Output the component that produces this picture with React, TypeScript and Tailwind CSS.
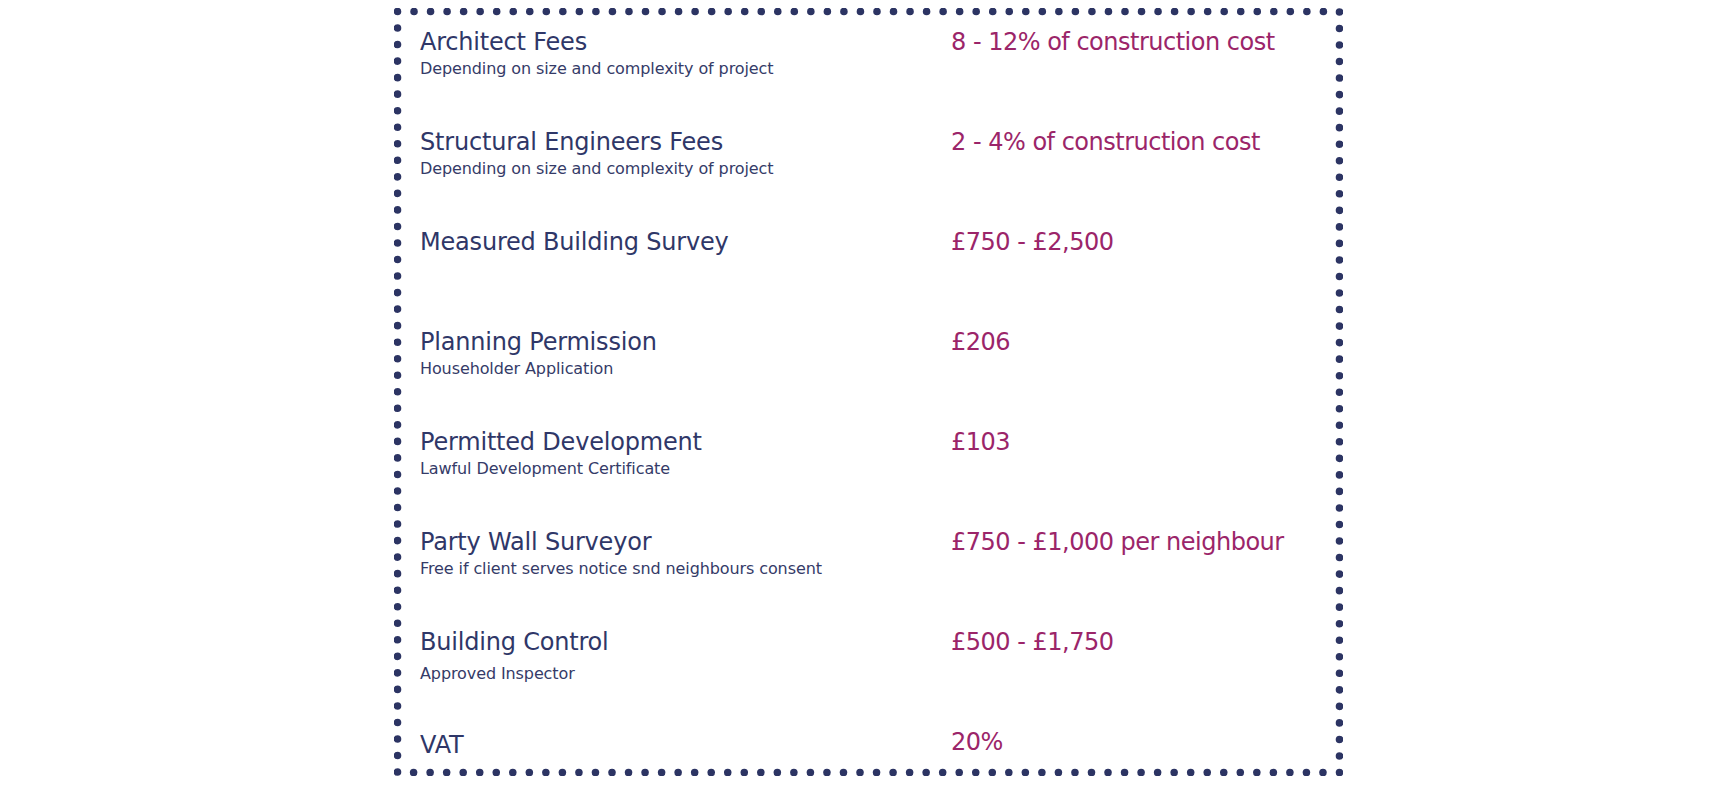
type Fee = {
  title: string;
  note?: string;
  price: string;
  noteClass?: string;
  titleClass?: string;
};

const fees: Fee[] = [
  {
    title: "Architect Fees",
    note: "Depending on size and complexity of project",
    price: "8 - 12% of construction cost",
  },
  {
    title: "Structural Engineers Fees",
    note: "Depending on size and complexity of project",
    price: "2 - 4% of construction cost",
  },
  { title: "Measured Building Survey", price: "£750 - £2,500" },
  {
    title: "Planning Permission",
    note: "Householder Application",
    price: "£206",
  },
  {
    title: "Permitted Development",
    note: "Lawful Development Certificate",
    price: "£103",
  },
  {
    title: "Party Wall Surveyor",
    note: "Free if client serves notice snd neighbours consent",
    price: "£750 - £1,000 per neighbour",
  },
  {
    title: "Building Control",
    note: "Approved Inspector",
    price: "£500 - £1,750",
    noteClass: "mt-[8px]",
  },
  { title: "VAT", price: "20%", titleClass: "mt-[3px]" },
];

// dotted frame drawn as round dots along the rect
function DottedFrame() {
  return (
    <svg
      className="pointer-events-none absolute inset-0"
      width="949"
      height="768"
      viewBox="0 0 949 768"
    >
      <rect
        x="3.5"
        y="3.5"
        width="942"
        height="761"
        fill="none"
        stroke="#2c3463"
        strokeWidth="7.6"
        strokeLinecap="round"
        pathLength={206}
        strokeDasharray="0 1"
      />
    </svg>
  );
}

function FeeRow({ fee, last }: { fee: Fee; last: boolean }) {
  return (
    <div className={`grid grid-cols-[531px_1fr] ${last ? "" : "h-[100px]"}`}>
      <div>
        <p
          className={`text-[24px] leading-[28px] tracking-[-0.2px] text-[#2f3768] ${fee.titleClass ?? ""}`}
        >
          {fee.title}
        </p>
        {fee.note && (
          <p
            className={`text-[16px] leading-[20px] tracking-[-0.1px] text-[#353b68] ${fee.noteClass ?? "mt-[3px]"}`}
          >
            {fee.note}
          </p>
        )}
      </div>
      <p className="text-[24px] leading-[28px] tracking-[-0.5px] text-[#9b2569]">
        {fee.price}
      </p>
    </div>
  );
}

export default function App() {
  return (
    <div
      className="h-[786px] w-full overflow-hidden bg-white"
      style={{ fontFamily: '"DejaVu Sans", sans-serif' }}
    >
      <div className="flex justify-center pl-[3px] pt-[7.5px]">
        <div className="relative h-[768px] w-[949px] pl-[26px] pt-[20.5px]">
          <DottedFrame />
          {fees.map((fee, i) => (
            <FeeRow key={fee.title} fee={fee} last={i === fees.length - 1} />
          ))}
        </div>
      </div>
    </div>
  );
}
